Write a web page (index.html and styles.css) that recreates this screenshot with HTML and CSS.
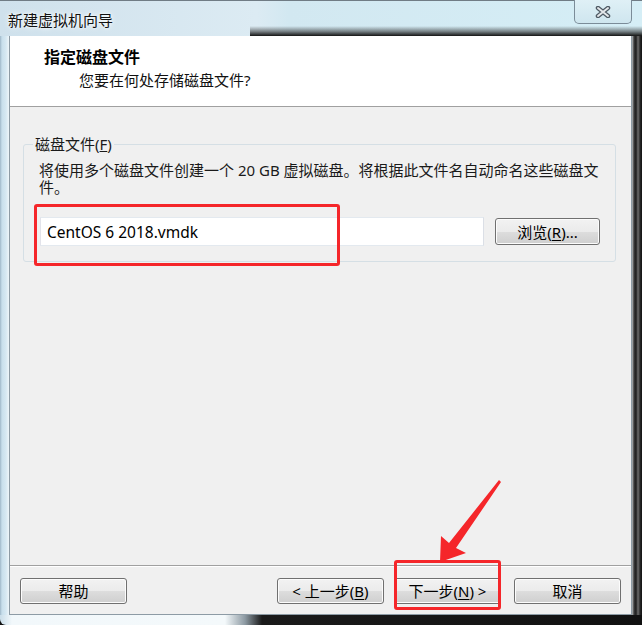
FILE: index.html
```html
<!DOCTYPE html>
<html lang="zh-CN">
<head>
  <meta charset="UTF-8"/><meta name="viewport" content="width=device-width, initial-scale=1.0"/>
  <title>新建虚拟机向导</title>
  <link rel="stylesheet" href="styles.css">
</head>
<body>
  <div class="window">
    <div class="titlebar">
      <span class="title">新建虚拟机向导</span>
      <div class="close-btn">
        <svg width="16" height="12" viewBox="0 0 16 12"><path d="M3 2 L13 10 M13 2 L3 10" stroke="#4e5963" stroke-width="4.5" stroke-linecap="round"/><path d="M3 2 L13 10 M13 2 L3 10" stroke="#e4e8eb" stroke-width="2" stroke-linecap="round"/></svg>
      </div>
    </div>
    <div class="frame-row">
      <div class="frame-left"></div>
      <div class="client">
        <header class="wizard-head">
          <h1>指定磁盘文件</h1>
          <p>您要在何处存储磁盘文件?</p>
        </header>
        <main class="wizard-body">
          <fieldset class="group">
            <legend>磁盘文件(<u>F</u>)</legend>
            <p class="desc">将使用多个磁盘文件创建一个 20 GB 虚拟磁盘。将根据此文件名自动命名这些磁盘文件。</p>
            <div class="file-row">
              <input type="text" value="CentOS 6 2018.vmdk"/>
              <button class="btn browse">浏览(<u>R</u>)...</button>
            </div>
          </fieldset>
        </main>
        <footer class="wizard-foot">
          <button class="btn">帮助</button>
          <div class="nav">
            <button class="btn">&lt; 上一步(<u>B</u>)</button>
            <button class="btn">下一步(<u>N</u>) &gt;</button>
            <button class="btn cancel">取消</button>
          </div>
        </footer>
      </div>
      <div class="frame-right"></div>
    </div>
    <div class="frame-bottom"></div>
  </div>

  <!-- annotations drawn over the screenshot -->
  <div class="mark mark-input"></div>
  <div class="mark mark-next"></div>
  <svg class="arrow" width="642" height="625" viewBox="0 0 642 625"><polygon points="440,562 441,536 449,543 499,480 501,482 456,548 466,553" fill="#f5262a"/></svg>
</body>
</html>
```

FILE: styles.css
```css
body{margin:0;width:642px;height:625px;overflow:hidden;position:relative;font-family:"Noto Sans","Noto Sans CJK SC",sans-serif;font-size:15px;color:#1a1a1a;background:#111;}
.window{display:flex;flex-direction:column;height:625px;}

.titlebar{height:36px;flex:none;display:flex;justify-content:space-between;align-items:flex-start;border-top:1px solid #707c85;box-sizing:border-box;
  background:linear-gradient(180deg,rgba(10,10,10,0) 0,rgba(40,40,40,.55) 55%,#141414 100%) no-repeat right bottom/392px 10px,
  linear-gradient(90deg,#cfe1ec 0,#dcebf3 40%,#d2e8f1 45%,#d5eef6 100%);}
.title{font-size:15px;line-height:20px;padding:9px 0 0 8px;color:#111;text-shadow:0 0 6px #fff,0 0 3px #fff;}
.close-btn{width:56px;height:23px;margin-right:10px;margin-top:-1px;border:1px solid #7b8c98;border-top:none;border-radius:0 0 5px 5px;background:linear-gradient(180deg,#dff0f6,#cfe6ef);display:flex;align-items:center;justify-content:center;}

.frame-row{display:flex;height:579px;flex:none;}
.frame-left{width:9px;background:linear-gradient(90deg,#9fb7c8 0,#c8dfec 2px,#d6e8f2 6px,#eef6fa 9px);}
.frame-right{width:10px;background:linear-gradient(90deg,#b8bcbf 0,#3a3a3a 2px,#1d1d1d 4px,#6d6d6d 6px,#2a2a2a 8px,#111 10px);}
.frame-bottom{height:10px;flex:none;border-radius:0 0 0 6px;background:linear-gradient(90deg,#c9dde9 0,#f2f8fb 12px,#f4f9fb 225px,#8d9aa3 245px,#1a1a1a 262px,#111 100%);}

.client{width:621px;display:flex;flex-direction:column;background:#f0f0f0;border:1px solid #8d9ba5;border-top:none;}
.wizard-head{flex:none;background:#fff;border-bottom:1px solid #a0a0a0;padding:11px 0 0 34px;height:59px;}
.wizard-head h1{margin:0;font-size:16px;line-height:20px;font-weight:bold;color:#000;}
.wizard-head p{margin:3px 0 0 35px;font-size:15px;line-height:20px;color:#111;}

.wizard-body{flex:1;padding:28px 15px 0 13px;}
.group{margin:0;padding:9px 15px 15px 15px;border:1px solid #d5dfe5;border-radius:3px;}
.group legend{margin-left:-6px;padding:0 2px;font-size:15px;line-height:18px;color:#1a1a1a;}
.desc{margin:0;font-size:15px;line-height:17px;color:#1a1a1a;}
.file-row{display:flex;align-items:center;gap:11px;margin-top:21px;}
.file-row input{width:444px;height:29px;box-sizing:border-box;margin:0 0 0 1px;padding:0 6px;border:1px solid #abadb3;border-top-color:#e3e9ef;border-left-color:#e2e3ea;border-right-color:#dbdfe6;border-bottom-color:#e3e9ef;background:#fff;font-family:inherit;font-size:15.5px;color:#000;outline:none;}

.btn{height:26px;width:107px;padding:0;box-sizing:border-box;border:1px solid #707070;border-radius:3px;font-family:inherit;font-size:15px;line-height:22px;color:#000;background:linear-gradient(180deg,#f2f2f2 0,#ebebeb 50%,#dddddd 51%,#cfcfcf 100%);box-shadow:inset 0 0 0 1px #fcfcfc;}
.btn u{text-decoration-thickness:1px;text-underline-offset:2px;}
.browse{width:105px;height:27px;}

.wizard-foot{height:49px;box-sizing:border-box;flex:none;display:flex;justify-content:space-between;align-items:flex-start;padding:12px 10px 0 10px;border-top:1px solid #a0a0a0;box-shadow:inset 0 1px 0 #fff;}
.nav{display:flex;gap:10px;}
.nav .cancel{margin-left:3px;}

.mark{position:absolute;border:3px solid #f5262a;border-radius:3px;box-sizing:border-box;pointer-events:none;}
.mark-input{left:34px;top:204px;width:306px;height:62px;}
.mark-next{left:394px;top:560px;width:107px;height:50px;}
.arrow{position:absolute;left:0;top:0;pointer-events:none;}
```
